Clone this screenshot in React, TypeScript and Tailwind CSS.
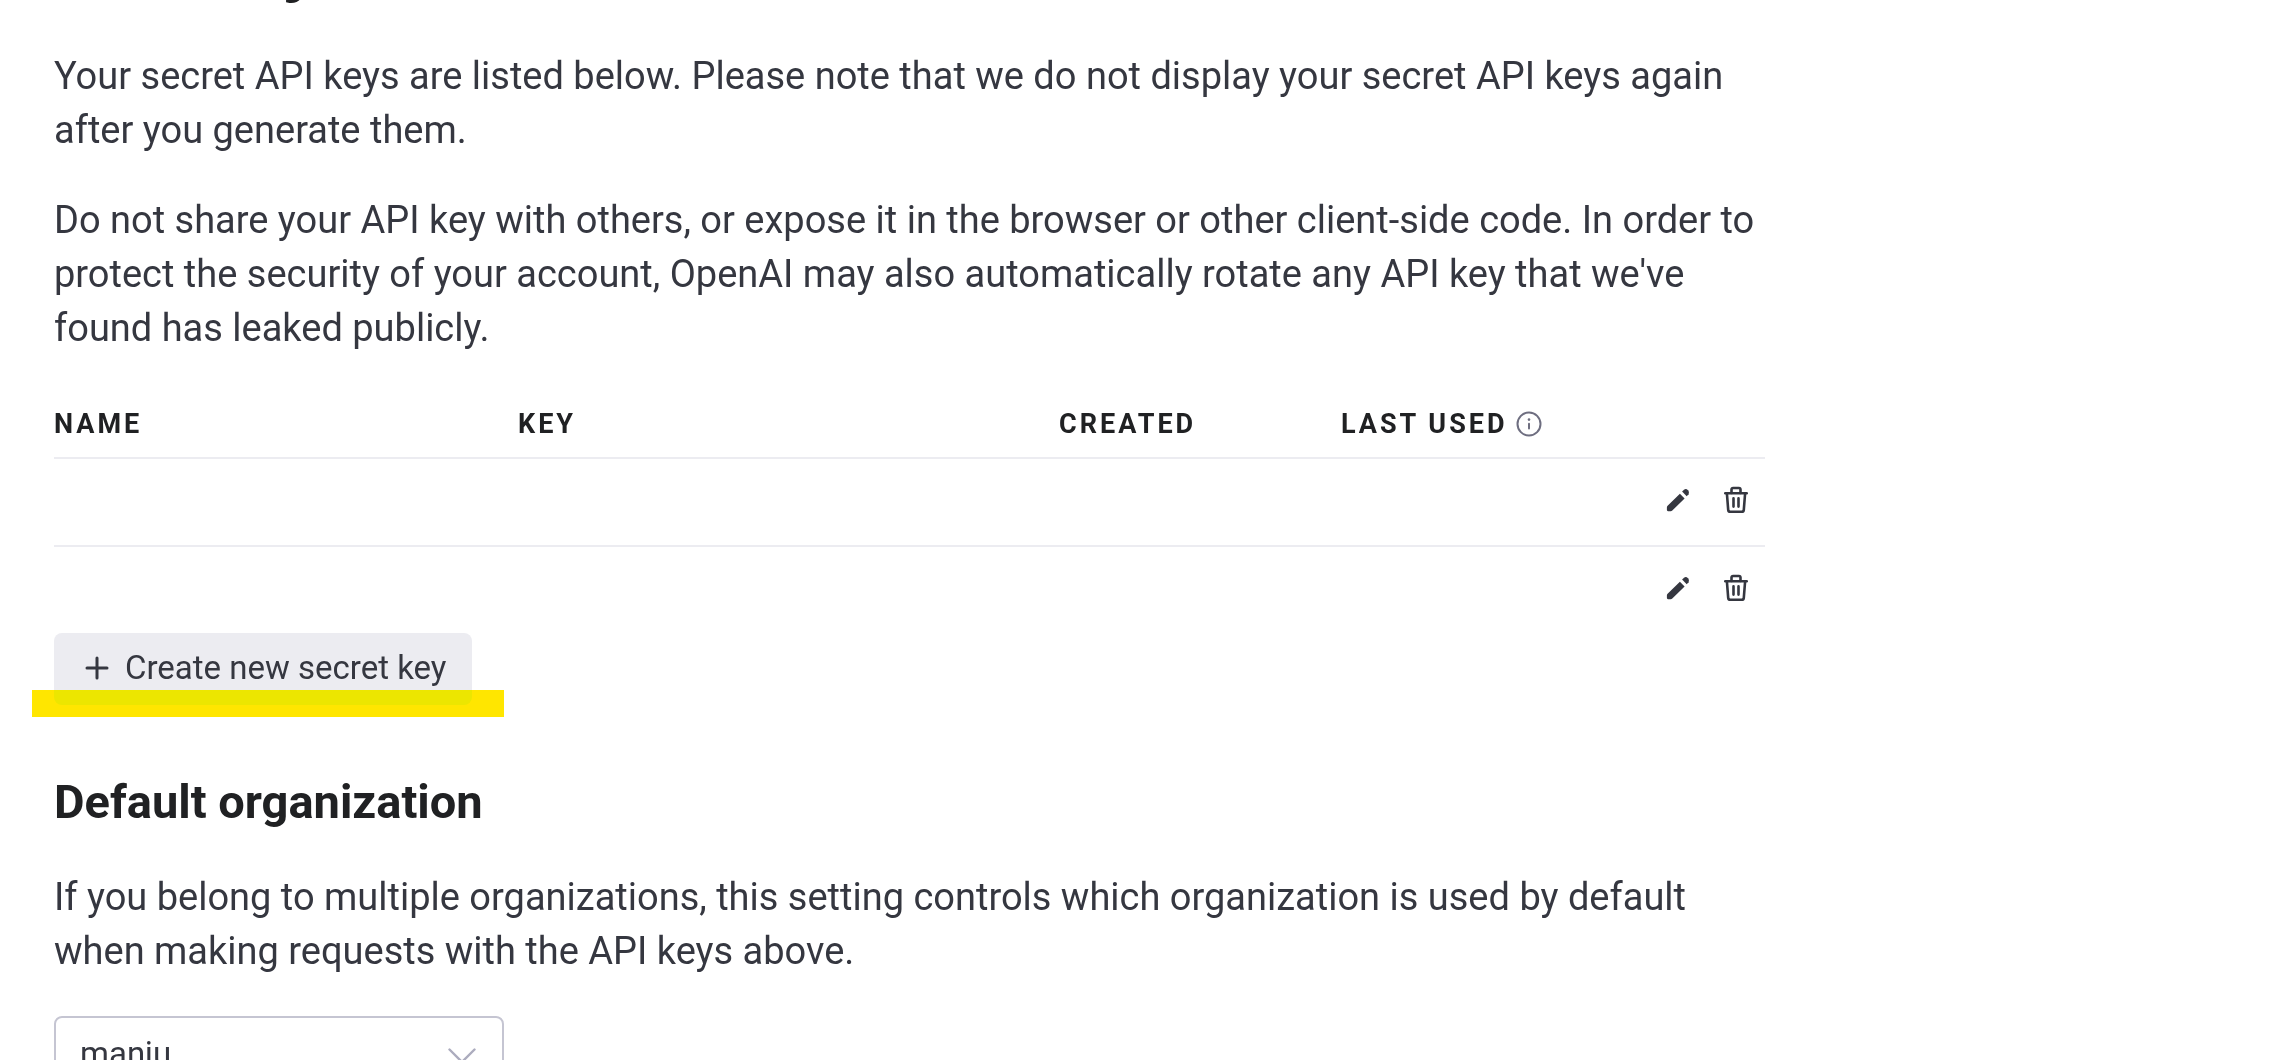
import React from "react";

function InfoIcon() {
  return (
    <svg className="size-[26px] shrink-0 text-[#6e6e80]" viewBox="0 0 26 26" fill="none" stroke="currentColor" strokeWidth="2" strokeLinecap="round" aria-hidden="true">
      <circle cx="13" cy="13" r="11.5" />
      <path d="M13 12.8v4.6" />
      <circle cx="13" cy="8.6" r="1.3" fill="currentColor" stroke="none" />
    </svg>
  );
}

function PencilIcon() {
  return (
    <svg className="size-6" viewBox="0 0 24 24" fill="currentColor" aria-hidden="true">
      <path d="M13.9 5.7 18.6 10.4 6.3 22.5Q5.6 23.2 4.7 23.2H2Q.9 23.2.9 22.1V19.3Q.9 18.4 1.6 17.7Z" />
      <path d="M16.1 3.6 18 1.7Q20 .3 22 2.2 23.9 4.2 22.6 6.3L20.7 8.2Z" />
    </svg>
  );
}

function TrashIcon() {
  return (
    <svg className="h-7 w-6" viewBox="0 0 24 28" fill="none" stroke="currentColor" strokeWidth="2.6" strokeLinecap="round" strokeLinejoin="round" aria-hidden="true">
      <path d="M1.3 7.3H22.7" />
      <path d="M7.5 7V3.6Q7.5 2 9.1 2H14.9Q16.5 2 16.5 3.6V7" />
      <path d="M2.9 7.5 4.2 23.8Q4.4 25.8 6.4 25.8H17.6Q19.6 25.8 19.8 23.8L21.1 7.5" />
      <path d="M9.5 12.4V20.6M14.5 12.4V20.6" />
    </svg>
  );
}

function PlusIcon() {
  return (
    <svg className="size-6" viewBox="0 0 24 24" fill="none" stroke="currentColor" strokeWidth="3" strokeLinecap="round" aria-hidden="true">
      <path d="M12 2V22M2 12H22" />
    </svg>
  );
}

function ChevronIcon() {
  return (
    <svg className="pointer-events-none absolute top-8 right-7 h-4 w-7 text-[#acacbe]" viewBox="0 0 28 16" fill="none" stroke="currentColor" strokeWidth="2.4" strokeLinecap="round" strokeLinejoin="round" aria-hidden="true">
      <path d="M1.5 1.5 14 14 26.5 1.5" />
    </svg>
  );
}

const keyRows = [1, 2];

export default function App() {
  return (
    <div className="h-screen overflow-hidden bg-white font-['Roboto',sans-serif] text-[38px] leading-[54px] text-[#353740]">
      <main className="-mt-20 w-[78%] pl-[54px]">
        <div className="w-full max-w-[1711px]">
          <h1 className="text-[78px] leading-[80px] font-bold text-[#202123]">API keys</h1>

          <p className="mt-[49px]">
            Your secret API keys are listed below. Please note that we do not display your secret API keys again
            after you generate them.
          </p>
          <p className="mt-9">
            Do not share your API key with others, or expose it in the browser or other client-side code. In order to
            protect the security of your account, OpenAI may also automatically rotate any API key that we've
            found has leaked publicly.
          </p>

          <table className="mt-9 w-full table-fixed border-separate border-spacing-0">
            <colgroup>
              <col className="w-[464px]" />
              <col className="w-[541px]" />
              <col className="w-[282px]" />
              <col />
              <col className="w-[162px]" />
            </colgroup>
            <thead>
              <tr className="h-[68px] text-left text-[27px] leading-8 tracking-[3px] text-[#202123]">
                <th scope="col" className="border-b-2 border-[#ececf1] font-bold">NAME</th>
                <th scope="col" className="border-b-2 border-[#ececf1] font-bold">KEY</th>
                <th scope="col" className="border-b-2 border-[#ececf1] font-bold">CREATED</th>
                <th scope="col" className="border-b-2 border-[#ececf1] font-bold">
                  <span className="flex items-center gap-2">
                    LAST USED
                    <InfoIcon />
                  </span>
                </th>
                <td className="border-b-2 border-[#ececf1]" />
              </tr>
            </thead>
            <tbody>
              {keyRows.map((row) => (
                <tr key={row} className="group h-[88px] last:h-[86px]">
                  <td className="border-b-2 border-[#ececf1] group-last:border-b-0" />
                  <td className="border-b-2 border-[#ececf1] group-last:border-b-0" />
                  <td className="border-b-2 border-[#ececf1] group-last:border-b-0" />
                  <td className="border-b-2 border-[#ececf1] group-last:border-b-0" />
                  <td className="border-b-2 border-[#ececf1] pr-[17px] pb-1 group-last:border-b-0">
                    <div className="flex items-center justify-end gap-[34px]">
                      <button type="button" aria-label="Edit key"><PencilIcon /></button>
                      <button type="button" aria-label="Delete key"><TrashIcon /></button>
                    </div>
                  </td>
                </tr>
              ))}
            </tbody>
          </table>

          <div className="relative w-fit">
            <button type="button" className="flex h-[72px] items-center gap-4 rounded-lg bg-[#ececf1] pr-[26px] pb-0.5 pl-[31px] text-[33px] leading-10">
              <PlusIcon />
              Create new secret key
            </button>
            <div className="absolute top-[57px] -right-8 -left-[22px] h-[27px] bg-[#ffe600] mix-blend-darken" />
          </div>

          <h2 className="mt-[69px] text-[47px] leading-[56px] font-bold text-[#202123]">Default organization</h2>
          <p className="mt-10">
            If you belong to multiple organizations, this setting controls which organization is used by default
            when making requests with the API keys above.
          </p>

          <div className="relative mt-[38px] w-[450px]">
            <select aria-label="Default organization" className="h-20 w-full appearance-none rounded-lg border-2 border-[#c5c5d2] bg-white px-6 pb-1 text-[33px] leading-10">
              <option>manju</option>
            </select>
            <ChevronIcon />
          </div>
        </div>
      </main>
    </div>
  );
}
